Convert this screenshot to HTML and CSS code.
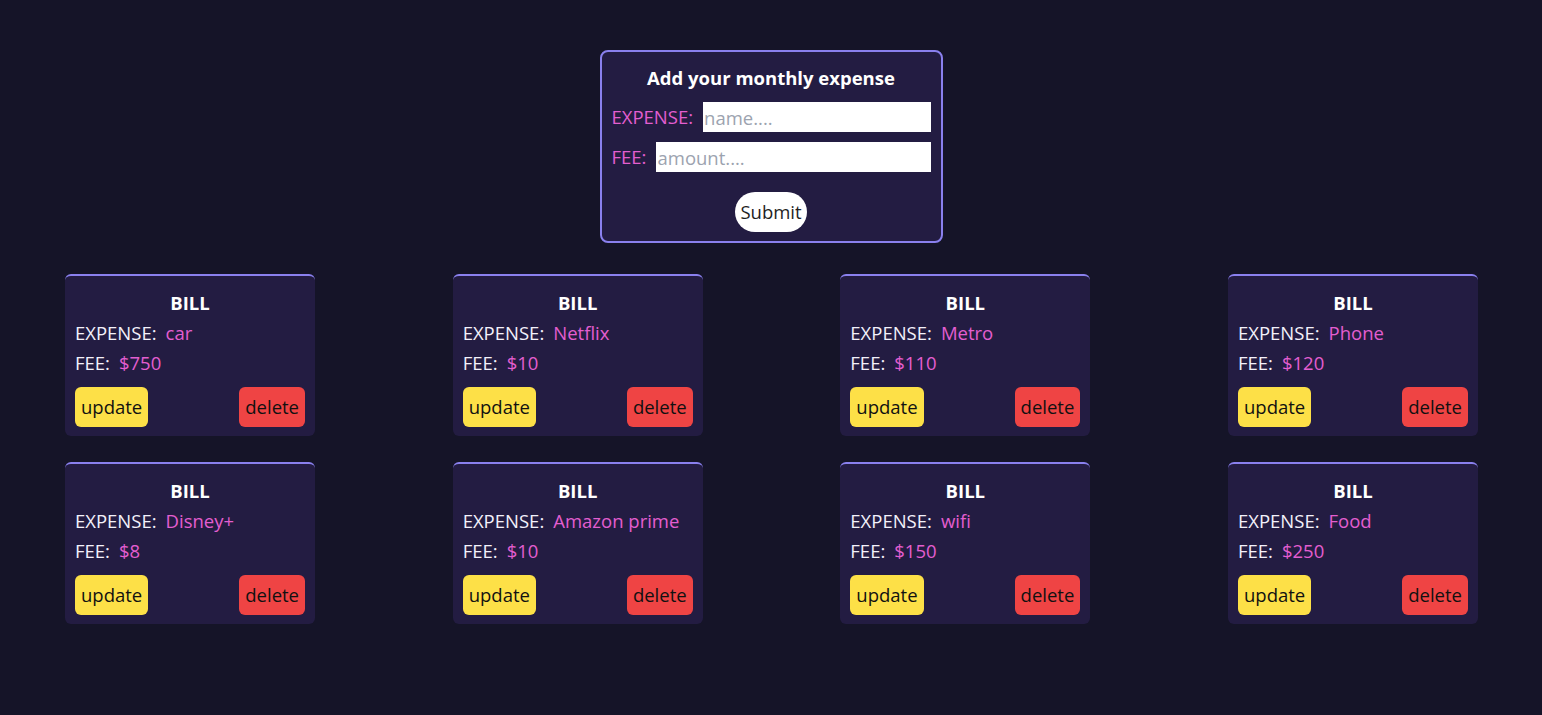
FILE: index.html
```html
<!DOCTYPE html>
<html lang="en">
<head>
<meta charset="utf-8">
<title>Monthly expenses</title>
<link rel="stylesheet" href="styles.css">
</head>
<body>
<main class="page">
  <form class="add-form">
    <h2 class="form-title">Add your monthly expense</h2>
    <div class="form-row">
      <label class="form-label">EXPENSE:</label>
      <input class="form-input" type="text" placeholder="name....">
    </div>
    <div class="form-row">
      <label class="form-label">FEE:</label>
      <input class="form-input" type="text" placeholder="amount....">
    </div>
    <div class="submit-wrap"><button class="submit-btn" type="button">Submit</button></div>
  </form>

  <section class="bills">
    <div class="bill">
      <div class="bill-title">BILL</div>
      <div class="bill-line"><span class="bill-key">EXPENSE:</span><span class="bill-val">car</span></div>
      <div class="bill-line"><span class="bill-key">FEE:</span><span class="bill-val">$750</span></div>
      <div class="bill-actions"><button class="btn btn-update">update</button><button class="btn btn-delete">delete</button></div>
    </div>
    <div class="bill">
      <div class="bill-title">BILL</div>
      <div class="bill-line"><span class="bill-key">EXPENSE:</span><span class="bill-val">Netflix</span></div>
      <div class="bill-line"><span class="bill-key">FEE:</span><span class="bill-val">$10</span></div>
      <div class="bill-actions"><button class="btn btn-update">update</button><button class="btn btn-delete">delete</button></div>
    </div>
    <div class="bill">
      <div class="bill-title">BILL</div>
      <div class="bill-line"><span class="bill-key">EXPENSE:</span><span class="bill-val">Metro</span></div>
      <div class="bill-line"><span class="bill-key">FEE:</span><span class="bill-val">$110</span></div>
      <div class="bill-actions"><button class="btn btn-update">update</button><button class="btn btn-delete">delete</button></div>
    </div>
    <div class="bill">
      <div class="bill-title">BILL</div>
      <div class="bill-line"><span class="bill-key">EXPENSE:</span><span class="bill-val">Phone</span></div>
      <div class="bill-line"><span class="bill-key">FEE:</span><span class="bill-val">$120</span></div>
      <div class="bill-actions"><button class="btn btn-update">update</button><button class="btn btn-delete">delete</button></div>
    </div>
    <div class="bill">
      <div class="bill-title">BILL</div>
      <div class="bill-line"><span class="bill-key">EXPENSE:</span><span class="bill-val">Disney+</span></div>
      <div class="bill-line"><span class="bill-key">FEE:</span><span class="bill-val">$8</span></div>
      <div class="bill-actions"><button class="btn btn-update">update</button><button class="btn btn-delete">delete</button></div>
    </div>
    <div class="bill">
      <div class="bill-title">BILL</div>
      <div class="bill-line"><span class="bill-key">EXPENSE:</span><span class="bill-val">Amazon prime</span></div>
      <div class="bill-line"><span class="bill-key">FEE:</span><span class="bill-val">$10</span></div>
      <div class="bill-actions"><button class="btn btn-update">update</button><button class="btn btn-delete">delete</button></div>
    </div>
    <div class="bill">
      <div class="bill-title">BILL</div>
      <div class="bill-line"><span class="bill-key">EXPENSE:</span><span class="bill-val">wifi</span></div>
      <div class="bill-line"><span class="bill-key">FEE:</span><span class="bill-val">$150</span></div>
      <div class="bill-actions"><button class="btn btn-update">update</button><button class="btn btn-delete">delete</button></div>
    </div>
    <div class="bill">
      <div class="bill-title">BILL</div>
      <div class="bill-line"><span class="bill-key">EXPENSE:</span><span class="bill-val">Food</span></div>
      <div class="bill-line"><span class="bill-key">FEE:</span><span class="bill-val">$250</span></div>
      <div class="bill-actions"><button class="btn btn-update">update</button><button class="btn btn-delete">delete</button></div>
    </div>
  </section>
</main>
</body>
</html>
```

FILE: styles.css
```css
* { box-sizing: border-box; }

html, body {
  margin: 0;
  padding: 0;
  background: #151428;
  height: 100%;
}

body {
  font-family: "Open Sans", "Noto Sans", sans-serif;
  font-size: 18.5px;
  line-height: 28px;
  color: #ffffff;
}

.page {
  padding-top: 50px;
  display: flex;
  flex-direction: column;
  align-items: center;
}

.add-form {
  width: 343px;
  background: #231c42;
  border: 2px solid #8a80ee;
  border-radius: 8px;
  padding: 12px 10px 9px 10px;
  display: flex;
  flex-direction: column;
  gap: 10px;
}

.form-title {
  margin: 0;
  font-size: 18.5px;
  line-height: 28px;
  font-weight: 700;
  text-align: center;
  color: #ffffff;
}

.form-row {
  display: flex;
  align-items: center;
  gap: 10px;
  height: 30px;
}

.form-label {
  color: #e35ed0;
  white-space: nowrap;
}

.form-input {
  flex: 1;
  min-width: 0;
  height: 30px;
  border: none;
  outline: none;
  padding: 0 1px;
  background: #ffffff;
  font-family: inherit;
  font-size: 18.5px;
  color: #111;
}

.form-input::placeholder {
  color: #9ca3af;
}

.submit-wrap {
  display: flex;
  justify-content: center;
  margin-top: 10px;
}

.submit-btn {
  background: #ffffff;
  color: #1f1f1f;
  border: none;
  border-radius: 999px;
  font-family: inherit;
  font-size: 18.5px;
  line-height: 28px;
  padding: 6px 5px 6px;
  cursor: pointer;
}

.bills {
  align-self: stretch;
  margin-top: 31px;
  padding: 0 64px 0 65px;
  display: grid;
  grid-template-columns: repeat(4, 250px);
  justify-content: space-between;
  row-gap: 26px;
}

.bill {
  width: 250px;
  background: #231c42;
  border-top: 2px solid #8a80ee;
  border-radius: 6px;
  padding: 13px 10px 9px 10px;
  display: flex;
  flex-direction: column;
  gap: 2px;
}

.bill-title {
  text-align: center;
  font-weight: 700;
}

.bill-line {
  display: flex;
  gap: 9px;
}

.bill-key {
  color: #f3f1fb;
}

.bill-val {
  color: #e35ed0;
}

.bill-actions {
  display: flex;
  justify-content: space-between;
  margin-top: 8px;
}

.btn {
  border: none;
  border-radius: 6px;
  font-family: inherit;
  font-size: 18.5px;
  line-height: 28px;
  padding: 6px 6px;
  color: #111111;
  cursor: pointer;
}

.btn-update { background: #fde047; }
.btn-delete { background: #ef4444; }
```
